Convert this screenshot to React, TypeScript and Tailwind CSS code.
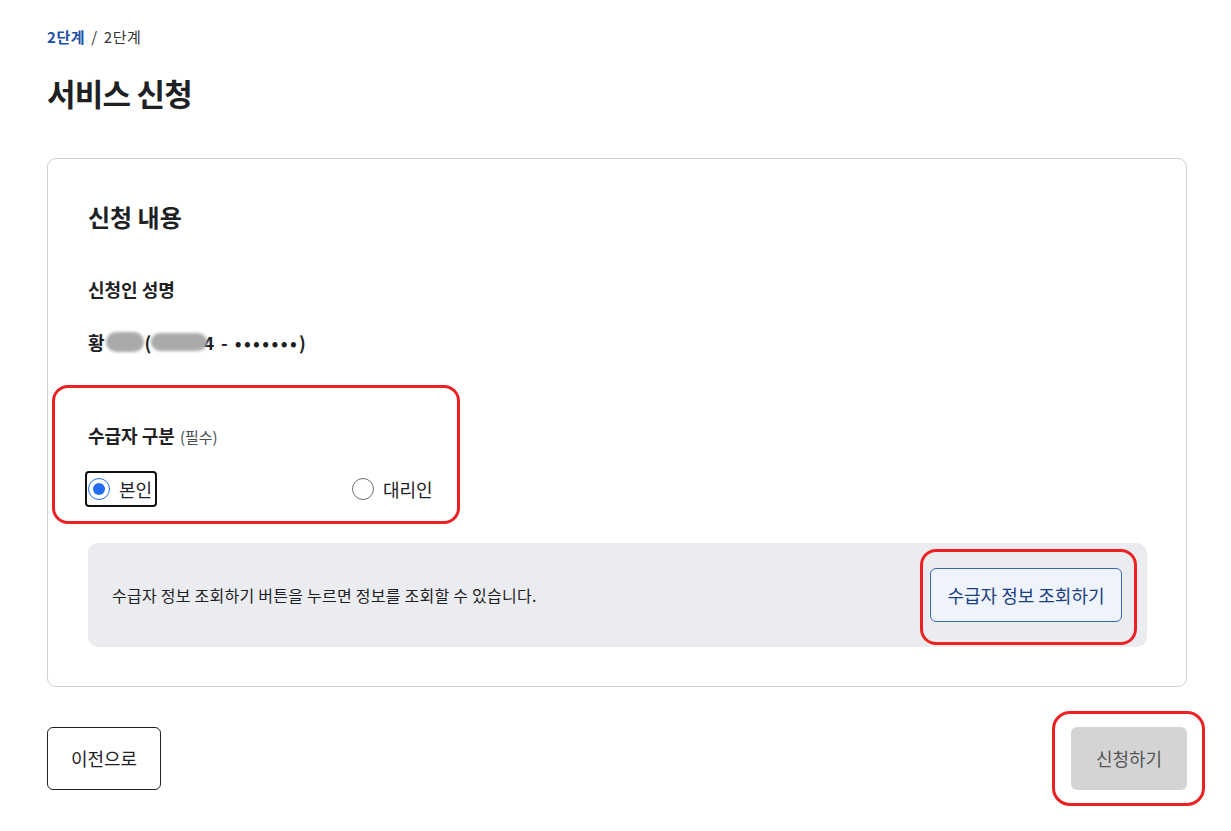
import React from 'react'

const FONT = { fontFamily: '"Noto Sans CJK KR", "Noto Sans", sans-serif' }

function Radio({ checked, label }: { checked?: boolean; label: string }) {
	return (
		<label className="flex items-center gap-[9px] text-[18px] text-[#1e2124]">
			<span
				className={
					checked
						? 'flex size-[22px] items-center justify-center rounded-full border border-[#256ef4] bg-white'
						: 'flex size-[22px] items-center justify-center rounded-full border border-[#6d7177] bg-white'
				}
			>
				{checked ? <span className="size-[12px] rounded-full bg-[#256ef4]" /> : null}
			</span>
			{label}
		</label>
	)
}

export default function App() {
	return (
		<div className="relative min-h-[831px] bg-white px-[47px] pt-[27px] text-[#1e2124]" style={FONT}>
			<nav className="flex items-center gap-[6px] text-[15px] leading-5 tracking-[0.6px]">
				<span className="font-bold text-[#1d4fa6]">2단계</span>
				<span className="text-[#333]">/</span>
				<span className="text-[#333]">2단계</span>
			</nav>

			<h1 className="mt-[26px] text-[31px] font-bold leading-10 tracking-tight">서비스 신청</h1>

			<section className="mt-[45px] w-[1140px] rounded-[9px] border border-[#cdd1d5] pl-[40px] pr-[39px] pt-[43px] pb-[39px]">
				<h2 className="text-[24px] font-bold leading-[30px]">신청 내용</h2>

				<div className="mt-[45px] text-[18px] font-bold leading-6">신청인 성명</div>
				<div className="mt-[29px] flex items-center text-[18px] font-bold leading-6">
					<span>황</span>
					<span className="mx-[1px] h-[20px] w-[38px] rounded-full bg-[#aaaaaa] blur-[1.5px]" />
					<span>(</span>
					<span className="-mr-[4px] h-[18px] w-[56px] rounded-full bg-[#aaaaaa] blur-[1.5px]" />
					<span>4</span>
					<span className="ml-[7px]">-</span>
					<span className="ml-[7px] tracking-[2.4px]">•••••••</span>
					<span>)</span>
				</div>

				<div className="mt-[69px] flex items-baseline gap-[5px] leading-6">
					<span className="text-[18px] font-bold">수급자 구분</span>
					<span className="text-[15px] text-[#464c53]">(필수)</span>
				</div>

				<div className="mt-[22px] flex h-[36px] items-center">
					<div className="w-[264px]">
						<div className="-ml-[3px] inline-flex h-[36px] items-center rounded-[4px] border-2 border-[#111] pl-[1px] pr-[3px]">
							<Radio checked label="본인" />
						</div>
					</div>
					<Radio label="대리인" />
				</div>

				<div className="mt-[36px] flex h-[104px] items-center justify-between rounded-[10px] bg-[#eaecef] pl-[24px] pr-[25px]">
					<p className="text-[16px] tracking-[0.25px] text-[#1e2124]">
						수급자 정보 조회하기 버튼을 누르면 정보를 조회할 수 있습니다.
					</p>
					<button
						type="button"
						className="h-[54px] w-[192px] rounded-[6px] border border-[#3a66b5] bg-[#eef3fc] text-[18px] text-[#1c3f82]"
					>
						수급자 정보 조회하기
					</button>
				</div>
			</section>

			<div className="mt-[40px] flex w-[1140px] items-center justify-between">
				<button
					type="button"
					className="h-[63px] w-[114px] rounded-[6px] border border-[#222] bg-white text-[18px] text-[#1e2124]"
				>
					이전으로
				</button>
				<button
					type="button"
					className="h-[63px] w-[116px] rounded-[6px] bg-[#d4d4d4] text-[18px] text-[#555]"
				>
					신청하기
				</button>
			</div>

			{/* annotation outlines */}
			<div className="pointer-events-none absolute left-[52px] top-[385px] h-[139px] w-[408px] rounded-[16px] border-[3px] border-[#ec2222]" />
			<div className="pointer-events-none absolute left-[920px] top-[549px] h-[96px] w-[217px] rounded-[16px] border-[3px] border-[#ec2222]" />
			<div className="pointer-events-none absolute left-[1052px] top-[711px] h-[95px] w-[153px] rounded-[18px] border-[3px] border-[#ec2222]" />
		</div>
	)
}
